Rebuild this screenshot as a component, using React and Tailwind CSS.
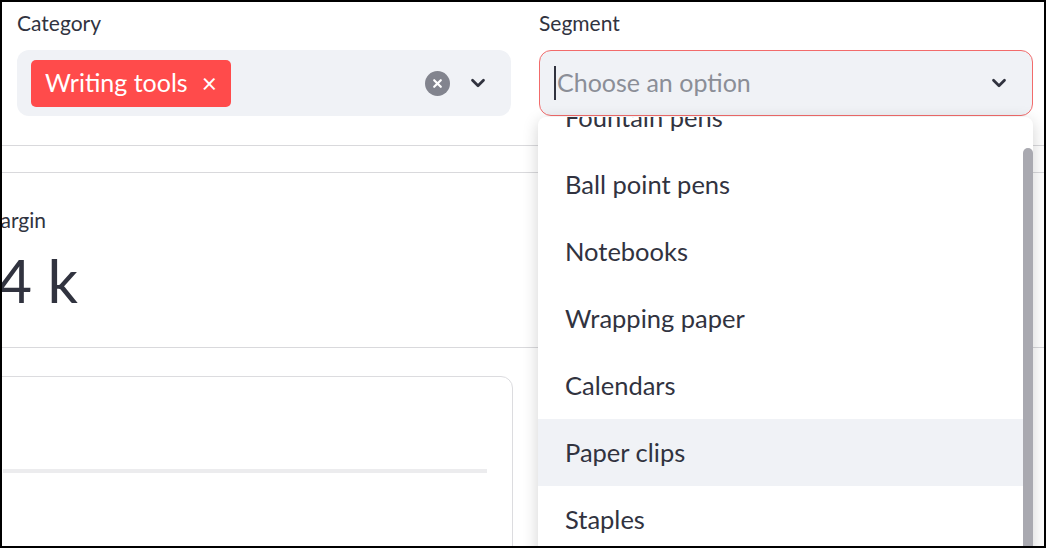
import { ChevronDown } from "lucide-react";

const font = { fontFamily: '"Lato", "Noto Sans", sans-serif' };

const options = [
  "Fountain pens",
  "Ball point pens",
  "Notebooks",
  "Wrapping paper",
  "Calendars",
  "Paper clips",
  "Staples",
];

function Chevron() {
  return <ChevronDown className="w-[22px] h-[22px] text-[#31333f]" strokeWidth={3} />;
}

export default function App() {
  return (
    <div
      className="relative w-[1046px] h-[548px] border-2 border-black bg-white overflow-hidden text-[#31333f]"
      style={font}
    >
      {/* filter row */}
      <div className="flex gap-[28px] pl-[15px] pt-[8px]">
        <div className="w-[494px]">
          <div className="text-[21px] leading-[26px] mb-[14px]">Category</div>
          <div className="h-[66px] rounded-[12px] bg-[#f0f2f6] flex items-center pl-[14px] pr-[22px]">
            <span className="h-[47px] rounded-[5px] bg-[#ff4b4b] text-white text-[25px] flex items-center pl-[14px] pr-[14px] gap-[14px]">
              Writing tools
              <span className="text-[26px] leading-none">×</span>
            </span>
            <div className="flex-1" />
            <span className="w-[25px] h-[25px] rounded-full bg-[#82848e] flex items-center justify-center mr-[17px]">
              <svg width="11" height="11" viewBox="0 0 10 10">
                <path d="M2 2 L8 8 M8 2 L2 8" stroke="white" strokeWidth="2" strokeLinecap="round" />
              </svg>
            </span>
            <Chevron />
          </div>
        </div>
        <div className="w-[494px]">
          <div className="text-[21px] leading-[26px] mb-[14px]">Segment</div>
          <div className="h-[66px] rounded-[12px] bg-[#f0f2f6] border border-[#f26b6b] flex items-center pl-[14px] pr-[22px]">
            <span className="w-[2px] h-[34px] bg-[#31333f] mr-[1px]" />
            <span className="text-[25px] text-[#8b8e97] flex-1">Choose an option</span>
            <Chevron />
          </div>
        </div>
      </div>

      {/* page body behind the dropdown */}
      <div className="mt-[29px] border-t border-[#d9d9dc]" />
      <div className="mt-[26px] border-t border-[#d9d9dc]" />
      <div className="pt-[34px] h-[174px]">
        <div className="w-[200px] -ml-[156px] text-right text-[21px] leading-[26px]">Margin</div>
        <div className="w-[222px] -ml-[146px] text-right text-[60px] leading-[70px] mt-[12px]">$1.4 k</div>
      </div>
      <div className="border-t border-[#d9d9dc]" />
      <div className="mt-[28px] w-[611px] -ml-[100px] h-[200px] border border-[#dcdcdf] rounded-[12px] pt-[92px] pr-[25px] pl-[100px]">
        <div className="h-[4px] bg-[#ececee]" />
      </div>

      {/* dropdown menu */}
      <div className="absolute left-[536px] top-[115px] w-[495px] h-[440px] bg-white rounded-t-[8px] shadow-[0_4px_16px_rgba(0,0,0,0.18)] overflow-hidden">
        <div className="-mt-[33px] mr-[10px] text-[25.5px]">
          {options.map((o) => (
            <div
              key={o}
              className={`h-[67px] flex items-center pl-[27px] ${o === "Paper clips" ? "bg-[#f0f2f6]" : ""}`}
            >
              {o}
            </div>
          ))}
        </div>
        <div className="absolute right-0 top-[31px] bottom-0 w-[10px] rounded-t-full bg-[#a9a9b0]" />
      </div>
    </div>
  );
}
